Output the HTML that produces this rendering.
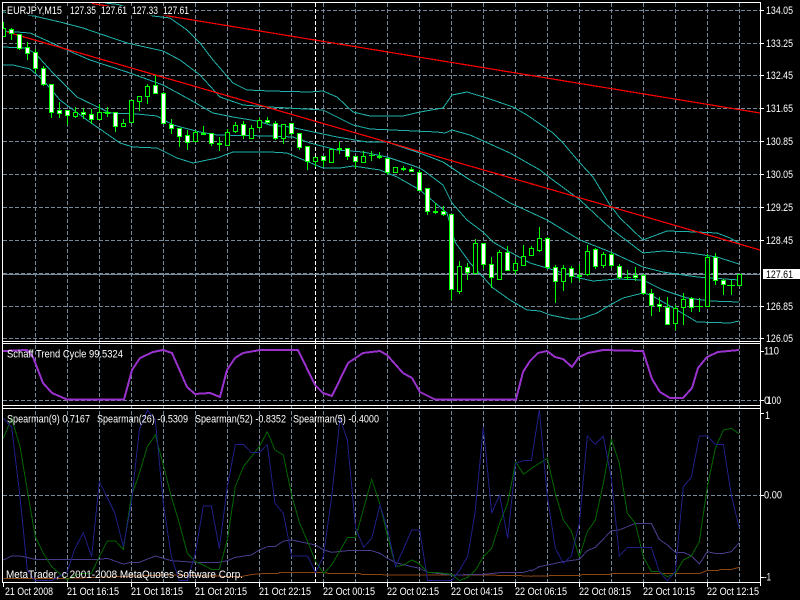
<!DOCTYPE html>
<html><head><meta charset="utf-8"><title>EURJPY,M15</title>
<style>
html,body{margin:0;padding:0;background:#000;width:800px;height:600px;overflow:hidden}
svg{display:block}
text{font-family:"Liberation Sans",sans-serif;font-size:11px;fill:#fff}
.g{stroke:#778899;stroke-width:1;stroke-dasharray:4 2;fill:none;shape-rendering:crispEdges}
.l{fill:none;shape-rendering:crispEdges}
.s{vector-effect:non-scaling-stroke;fill:none;stroke-width:1;shape-rendering:crispEdges}
</style></head><body>
<svg width="800" height="600" viewBox="0 0 800 600" xmlns="http://www.w3.org/2000/svg">
<rect width="800" height="600" fill="#000"/>
<!-- grid -->
<path class="g" d="M3 10.5H760M3 43.5H760M3 75.5H760M3 108.5H760M3 141.5H760M3 174.5H760M3 207.5H760M3 240.5H760M3 306.5H760M3 338.5H760M3 273.5H760M3 400.5H760M3 495.5H760"/>
<path class="g" d="M35.5 3V582M67.5 3V582M99.5 3V582M131.5 3V582M163.5 3V582M195.5 3V582M227.5 3V582M259.5 3V582M291.5 3V582M323.5 3V582M355.5 3V582M387.5 3V582M419.5 3V582M451.5 3V582M483.5 3V582M515.5 3V582M547.5 3V582M579.5 3V582M611.5 3V582M643.5 3V582M675.5 3V582M707.5 3V582M739.5 3V582"/>
<path class="g" style="stroke:#fff" d="M315.5 3V582"/>
<path class="l" stroke="#778899" d="M3 274.5H760"/>
<!-- bands -->
<g class="l" stroke="#20b2aa">
<polyline points="105,3 118,4.5 153,16 170,18 187,30 200,43 213,60 233,83 247,90 270,91 310,92 323,91 337,97 353,112 370,116 403,116 420,112 443,108 452,95 467,92 487,98 513,107 527,115 553,133 563,143 580,163 593,177 610,205 620,218 643,240 667,231 697,232 717,233 730,238 739,243"/>
<polyline points="3,12 34,16 60,22 83,28 127,43 163,51 180,60 200,75 220,97 243,105 270,107 323,110 353,125 370,129 437,132 445,133 452,130 470,135 510,153 540,170 553,180 580,200 610,228 643,253 663,251 690,253 717,257 739,264"/>
<polyline points="3,31 30,33 50,42 67,50 90,60 127,72 163,85 187,98 213,113 233,117 257,121 270,125 290,127 337,137 367,142 387,142 417,152 443,162 470,180 483,187 510,203 530,212 547,220 580,240 613,253 643,267 663,272 697,277 739,280"/>
<polyline points="3,47 25,48 35,53 53,73 77,97 110,113 137,114 157,116 173,125 200,132 217,135 270,136 293,137 310,143 337,150 363,152 387,157 417,167 423,170 443,185 452,203 467,220 483,232 493,242 510,252 530,263 547,268 579,278 593,281 617,279 643,280 663,290 687,298 710,301 739,302"/>
<polyline points="3,65 13,65 30,69 43,80 60,100 87,120 120,143 133,147 157,148 177,158 193,163 217,158 233,152 270,152 287,153 323,168 340,168 353,166 380,170 397,177 420,190 447,213 455,242 470,263 483,277 493,288 510,300 527,310 540,311 550,315 570,319 580,319 597,313 610,305 623,298 643,293 651,295 663,302 677,310 697,322 730,323 739,321"/>
</g>
<!-- trend lines -->
<path class="l" stroke="#ff0000" stroke-width="1.2" d="M92 3.5L760 113M7 32L760 250"/>
<!-- candles: wicks -->
<path class="l" stroke="#00ff00" d="M3.5 22V36M11.5 28V40M19.5 34V50M27.5 42V60M35.5 49V73M43.5 66V86M51.5 84V118M59.5 102V118M67.5 110V125M75.5 107V118M83.5 108V119M91.5 109V124M99.5 104V120M107.5 107V117M115.5 112V132M123.5 119V127M131.5 100V122M139.5 96V111M147.5 84V104M155.5 75V94M163.5 92V124M171.5 119V134M179.5 128V147M187.5 130V150M195.5 130V142M203.5 126V135M211.5 133V146M219.5 137V151M227.5 129V146M235.5 122V133M243.5 121V139M251.5 125V139M259.5 118V129M267.5 117V124M275.5 121V140M283.5 124V144M291.5 123V135M299.5 133V150M307.5 146V170M315.5 157V167M323.5 156V167M331.5 149V163M339.5 142V154M347.5 148V160M355.5 156V168M363.5 151V162M371.5 151V161M379.5 152V159M387.5 158V175M395.5 167V172M403.5 166V171M411.5 167V171M419.5 170V190M427.5 188V215M435.5 203V214M443.5 206V216M451.5 214V300M459.5 261V294M467.5 263V280M475.5 239V274M483.5 243V269M491.5 257V288M499.5 250V280M507.5 246V271M515.5 259V274M523.5 245V266M531.5 246V256M539.5 227V252M547.5 237V269M555.5 265V303M563.5 265V291M571.5 266V283M579.5 265V281M587.5 245V276M595.5 248V269M603.5 252V268M611.5 252V268M619.5 264V279M627.5 270V280M635.5 267V281M643.5 274V295M651.5 289V316M659.5 297V312M667.5 297V325M675.5 305V330M683.5 293V325M691.5 297V312M699.5 298V312M707.5 254V307M715.5 253V285M723.5 279V295M731.5 280V295M739.5 274V286M624 277.5H631M695.5 306.5H703M727 285.5H735M103 112.5H111"/>
<!-- white bodies -->
<path style="fill:#fff;shape-rendering:crispEdges" stroke="#00ff00" d="M9.5 29.5h4v4h-4zM17.5 34.5h4v14h-4zM25.5 47.5h4v6h-4zM33.5 52.5h4v16h-4zM41.5 68.5h4v16h-4zM49.5 84.5h4v28h-4zM57.5 110.5h4v3h-4zM65.5 110.5h4v5h-4zM81.5 112.5h4v2h-4zM89.5 114.5h4v5h-4zM105.5 112.5h4v1h-4zM113.5 112.5h4v14h-4zM153.5 85.5h4v8h-4zM161.5 93.5h4v30h-4zM169.5 124.5h4v4h-4zM177.5 128.5h4v8h-4zM185.5 135.5h4v7h-4zM201.5 133.5h4v1h-4zM209.5 133.5h4v10h-4zM217.5 143.5h4v1h-4zM241.5 124.5h4v11h-4zM265.5 120.5h4v2h-4zM273.5 123.5h4v15h-4zM289.5 123.5h4v10h-4zM297.5 133.5h4v14h-4zM305.5 146.5h4v15h-4zM321.5 156.5h4v4h-4zM337.5 148.5h4v1h-4zM345.5 148.5h4v8h-4zM353.5 156.5h4v5h-4zM377.5 156.5h4v1h-4zM385.5 158.5h4v14h-4zM401.5 168.5h4v1h-4zM409.5 169.5h4v2h-4zM417.5 172.5h4v18h-4zM425.5 188.5h4v23h-4zM433.5 211.5h4v1h-4zM441.5 211.5h4v3h-4zM449.5 214.5h4v75h-4zM465.5 267.5h4v5h-4zM481.5 243.5h4v21h-4zM489.5 264.5h4v13h-4zM505.5 252.5h4v18h-4zM545.5 238.5h4v29h-4zM553.5 267.5h4v14h-4zM569.5 268.5h4v8h-4zM577.5 275.5h4v1h-4zM593.5 249.5h4v17h-4zM609.5 254.5h4v11h-4zM617.5 266.5h4v11h-4zM633.5 275.5h4v2h-4zM641.5 275.5h4v18h-4zM649.5 293.5h4v12h-4zM657.5 304.5h4v2h-4zM665.5 307.5h4v17h-4zM689.5 298.5h4v9h-4zM713.5 257.5h4v23h-4zM721.5 280.5h4v4h-4z"/>
<!-- black bodies -->
<path style="fill:#000;shape-rendering:crispEdges" stroke="#00ff00" d="M1.5 28.5h4v8h-4zM73.5 112.5h4v4h-4zM97.5 112.5h4v7h-4zM121.5 123.5h4v3h-4zM129.5 100.5h4v22h-4zM137.5 96.5h4v5h-4zM145.5 86.5h4v10h-4zM193.5 132.5h4v9h-4zM225.5 132.5h4v13h-4zM233.5 125.5h4v6h-4zM249.5 128.5h4v10h-4zM257.5 120.5h4v7h-4zM281.5 124.5h4v14h-4zM313.5 157.5h4v4h-4zM329.5 149.5h4v13h-4zM361.5 156.5h4v6h-4zM393.5 167.5h4v5h-4zM457.5 266.5h4v25h-4zM473.5 243.5h4v30h-4zM497.5 252.5h4v27h-4zM513.5 263.5h4v7h-4zM521.5 256.5h4v9h-4zM529.5 248.5h4v7h-4zM537.5 238.5h4v12h-4zM561.5 268.5h4v13h-4zM585.5 251.5h4v23h-4zM601.5 254.5h4v11h-4zM673.5 308.5h4v15h-4zM681.5 299.5h4v8h-4zM705.5 257.5h4v49h-4zM737.5 274.5h4v11h-4z"/>
<path class="l" stroke="#00ff00" d="M201.5 133.5h4M337.5 148.5h4M369 155.5h6M377.5 156.5h4M401.5 168.5h4M433.5 211.5h4"/>
<!-- header text backing -->
<rect x="6" y="6" width="184" height="9.5" fill="#000"/>
<!-- Schaff -->
<polyline class="l" stroke="#9932cc" stroke-width="2" points="3,351 27,350 33,357 43,383 52,393 67,399.5 124,399.5 132,370 140,358 153,352 163,350 172,353 187,387 195,394 210,393 220,397 227,370 235,358 243,353 260,350 298,350 315,385 323,393 332,396 348,363 363,353 380,351 387,355 403,373 412,378 420,392 435,399.5 516,399.5 523,372 530,361 538,353 547,351 555,357 563,359 572,367 579,357 588,353 603,350 643,351 652,379 660,392 670,398 683,398 692,388 698,368 707,357 718,352 739,350"/>
<!-- Spearman -->
<g transform="translate(0,340) scale(.33333)">
<polyline class="s" stroke="#8b4513" points="10,715 200,715 500,705 720,710 760,703 802,700"/>
<polyline class="s" stroke="#483d8b" points="10,660 35,648 60,648 106,658 298,658 322,655 370,672 394,667 418,667 466,648 514,662 586,667 658,667 682,662 706,652 754,645 778,630 802,620"/>
<polyline class="s" stroke="#006400" points="10,295 35,235 60,320 85,470 106,590 130,640 155,680 202,720 226,705 250,700 274,700 298,650 322,603 346,603 370,628 394,470 418,400 442,320 466,285 490,375 514,470 538,550 562,640 586,665 610,675 634,688 658,688 682,600 706,440 730,380 754,350 778,320 802,275"/>
<polyline class="s" stroke="#1e1e84" points="10,235 35,262 60,470 82,690 105,722 155,722 202,695 225,625 250,578 275,650 298,425 345,520 370,620 394,490 418,270 442,210 466,240 490,490 514,650 538,722 562,722 586,640 610,498 634,498 658,625 682,440 706,313 730,313 754,338 778,338 802,313"/>
</g>
<g transform="translate(265,340) scale(.33333)">
<polyline class="s" stroke="#8b4513" points="7,700 40,700 45,697 175,697 190,700 285,700 290,704 750,706 800,709"/>
<polyline class="s" stroke="#483d8b" points="7,620 30,620 55,603 80,600 128,610 152,615 176,630 200,637 248,632 320,632 345,640 368,655 392,668 440,680 464,685 488,697 560,705 655,703 704,698 752,698 776,697 800,690"/>
<polyline class="s" stroke="#006400" points="7,275 30,330 55,345 80,465 104,550 128,605 152,665 176,700 200,675 248,592 272,592 320,418 344,490 368,590 392,680 416,675 440,660 464,672 488,697 512,697 560,703 584,722 608,712 632,690 655,650 680,625 704,550 728,490 752,365 776,403 800,385"/>
<polyline class="s" stroke="#1e1e84" points="7,313 30,490 55,520 80,648 128,648 152,698 175,650 200,470 225,235 247,300 272,565 296,622 320,595 345,495 368,570 392,680 440,570 464,570 488,722 560,722 584,690 608,650 630,520 655,262 680,518 704,465 728,595 752,370 776,362 800,362"/>
</g>
<g transform="translate(530,340) scale(.33333)">
<polyline class="s" stroke="#8b4513" points="4,708 150,706 160,703 240,703 250,700 510,700 530,692 565,692 570,688 605,688 628,682"/>
<polyline class="s" stroke="#483d8b" points="4,693 28,680 52,675 100,665 148,658 172,632 196,622 244,572 268,570 316,550 364,550 388,598 412,615 436,637 460,637 484,648 508,672 532,635 556,640 580,640 604,635 628,608"/>
<polyline class="s" stroke="#006400" points="4,385 28,370 52,355 76,460 100,540 124,573 148,650 172,575 196,540 220,430 244,298 268,370 292,520 316,550 340,650 364,695 388,695 412,710 436,700 460,660 484,648 508,605 532,440 556,325 580,270 604,265 628,282"/>
<polyline class="s" stroke="#1e1e84" points="4,362 28,210 52,470 76,625 100,670 124,648 148,550 172,288 196,313 220,288 244,415 268,648 292,622 364,622 388,695 412,722 436,695 460,440 484,412 508,288 532,288 556,313 580,313 604,465 628,565"/>
</g>
<!-- frame -->
<rect x="0" y="0" width="2" height="600" fill="#000"/>
<rect x="761" y="0" width="39" height="600" fill="#000"/>
<rect x="0" y="583" width="800" height="17" fill="#000"/>
<path class="l" stroke="#fff" d="M2.5 2V583M760.5 2V586M2 2.5H761M2 341.5H761M2 343.5H761M2 405.5H761M2 408.5H761M2 582.5H761"/>
<path class="l" stroke="#fff" d="M761 10.5h3M761 43.5h3M761 75.5h3M761 108.5h3M761 141.5h3M761 174.5h3M761 207.5h3M761 240.5h3M761 306.5h3M761 338.5h3M761 400.5h3M761 351.5h3M761 413.5h3M761 495.5h3M761 577.5h3M3.5 583v4M67.5 583v4M131.5 583v4M195.5 583v4M259.5 583v4M323.5 583v4M387.5 583v4M451.5 583v4M515.5 583v4M579.5 583v4M643.5 583v4M707.5 583v4"/>
<!-- text -->
<text x="7" y="14" textLength="55" lengthAdjust="spacingAndGlyphs">EURJPY,M15</text>
<text x="70" y="14" textLength="26" lengthAdjust="spacingAndGlyphs">127.35</text>
<text x="101" y="14" textLength="26" lengthAdjust="spacingAndGlyphs">127.61</text>
<text x="132" y="14" textLength="26" lengthAdjust="spacingAndGlyphs">127.33</text>
<text x="163" y="14" textLength="26" lengthAdjust="spacingAndGlyphs">127.61</text>
<text x="7" y="357.5" textLength="116" lengthAdjust="spacingAndGlyphs">Schaff Trend Cycle 99.5324</text>
<text x="7" y="422.5" textLength="83" lengthAdjust="spacingAndGlyphs">Spearman(9) 0.7167</text>
<text x="97" y="422.5" textLength="91" lengthAdjust="spacingAndGlyphs">Spearman(26) -0.5309</text>
<text x="195" y="422.5" textLength="91" lengthAdjust="spacingAndGlyphs">Spearman(52) -0.8352</text>
<text x="293" y="422.5" textLength="86" lengthAdjust="spacingAndGlyphs">Spearman(5) -0.4000</text>
<text x="6" y="578" textLength="237" lengthAdjust="spacingAndGlyphs">MetaTrader, c 2001-2008 MetaQuotes Software Corp.</text>
<g>
<text x="766" y="14" textLength="27" lengthAdjust="spacingAndGlyphs">134.05</text>
<text x="766" y="47" textLength="27" lengthAdjust="spacingAndGlyphs">133.25</text>
<text x="766" y="79" textLength="27" lengthAdjust="spacingAndGlyphs">132.45</text>
<text x="766" y="112" textLength="27" lengthAdjust="spacingAndGlyphs">131.65</text>
<text x="766" y="145" textLength="27" lengthAdjust="spacingAndGlyphs">130.85</text>
<text x="766" y="178" textLength="27" lengthAdjust="spacingAndGlyphs">130.05</text>
<text x="766" y="211" textLength="27" lengthAdjust="spacingAndGlyphs">129.25</text>
<text x="766" y="244" textLength="27" lengthAdjust="spacingAndGlyphs">128.45</text>
<text x="766" y="310" textLength="27" lengthAdjust="spacingAndGlyphs">126.85</text>
<text x="766" y="342" textLength="27" lengthAdjust="spacingAndGlyphs">126.05</text>
</g>
<rect x="763" y="269" width="37" height="10" fill="#fff"/>
<text x="766" y="278" textLength="27" lengthAdjust="spacingAndGlyphs" style="fill:#000">127.61</text>
<text x="764" y="354.5" textLength="15" lengthAdjust="spacingAndGlyphs">110</text>
<text x="764" y="404" textLength="6" lengthAdjust="spacingAndGlyphs">0</text>
<text x="767" y="404" textLength="14" lengthAdjust="spacingAndGlyphs">100</text>
<text x="765" y="419" textLength="5" lengthAdjust="spacingAndGlyphs">1</text>
<text x="764" y="498.5" textLength="18" lengthAdjust="spacingAndGlyphs">0.00</text>
<text x="764" y="580.5" textLength="7" lengthAdjust="spacingAndGlyphs">-1</text>
<text x="5" y="595" textLength="48" lengthAdjust="spacingAndGlyphs">21 Oct 2008</text>
<text x="67" y="595" textLength="52" lengthAdjust="spacingAndGlyphs">21 Oct 16:15</text>
<text x="131" y="595" textLength="52" lengthAdjust="spacingAndGlyphs">21 Oct 18:15</text>
<text x="195" y="595" textLength="52" lengthAdjust="spacingAndGlyphs">21 Oct 20:15</text>
<text x="259" y="595" textLength="52" lengthAdjust="spacingAndGlyphs">21 Oct 22:15</text>
<text x="323" y="595" textLength="52" lengthAdjust="spacingAndGlyphs">22 Oct 00:15</text>
<text x="387" y="595" textLength="52" lengthAdjust="spacingAndGlyphs">22 Oct 02:15</text>
<text x="451" y="595" textLength="52" lengthAdjust="spacingAndGlyphs">22 Oct 04:15</text>
<text x="515" y="595" textLength="52" lengthAdjust="spacingAndGlyphs">22 Oct 06:15</text>
<text x="579" y="595" textLength="52" lengthAdjust="spacingAndGlyphs">22 Oct 08:15</text>
<text x="643" y="595" textLength="52" lengthAdjust="spacingAndGlyphs">22 Oct 10:15</text>
<text x="707" y="595" textLength="52" lengthAdjust="spacingAndGlyphs">22 Oct 12:15</text>
</svg>
</body></html>
